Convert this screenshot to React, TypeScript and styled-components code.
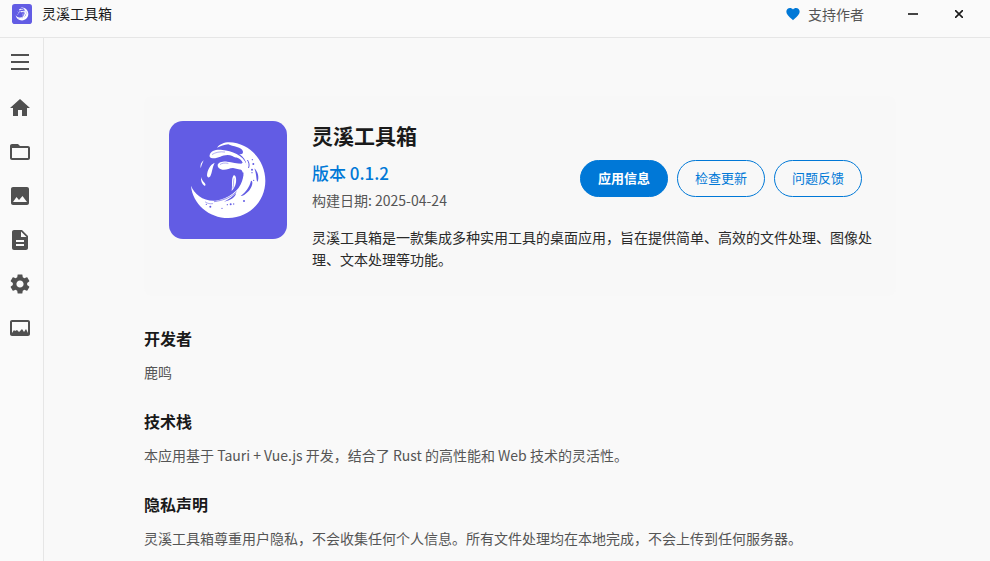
import React from "react";
import styled, { createGlobalStyle } from "styled-components";

const GlobalStyle = createGlobalStyle`
  * { box-sizing: border-box; }
  html, body, #root { height: 100%; }
  body {
    margin: 0;
    background: #fafafa;
    color: #1a1a1a;
    font-family: "Noto Sans CJK SC", sans-serif;
    font-size: 14px;
    overflow: hidden;
  }
  button { font-family: inherit; cursor: pointer; }
`;

const Window = styled.div`
  display: flex;
  flex-direction: column;
  height: 100vh;
`;

const TitleBar = styled.header`
  display: flex;
  align-items: flex-start;
  justify-content: space-between;
  flex: none;
  height: 38px;
  padding-left: 12px;
  border-bottom: 1px solid #e6e6e6;
`;

const TitleGroup = styled.div`
  display: flex;
  align-items: center;
  height: 28px;
`;

const AppName = styled.span`
  margin-left: 10px;
  padding-bottom: 2px;
  line-height: 20px;
`;

const Support = styled.a`
  display: flex;
  align-items: center;
  gap: 7px;
  margin-right: 26px;
  color: #555;
  line-height: 20px;
  text-decoration: none;
`;

const WindowButton = styled.button`
  display: flex;
  align-items: center;
  justify-content: center;
  width: 46px;
  height: 28px;
  padding: 0;
  border: 0;
  background: none;
  color: #1a1a1a;

  &:last-child { margin-right: 8px; }
`;

const Body = styled.div`
  display: flex;
  flex: 1;
  min-height: 0;
`;

const Sidebar = styled.nav`
  display: flex;
  flex-direction: column;
  flex: none;
  width: 44px;
  padding-top: 2px;
  border-right: 1px solid #e6e6e6;
`;

const NavButton = styled.button<{ $menu?: boolean }>`
  display: flex;
  align-items: center;
  justify-content: center;
  width: 40px;
  height: 44px;
  margin-bottom: ${(p) => (p.$menu ? "2px" : "0")};
  padding: 0;
  border: 0;
  background: none;
  color: #505050;
`;

const Content = styled.main`
  flex: 1;
  min-width: 0;
  padding: 58px 94px 0 100px;
  background: #f9f9f9;
  overflow: hidden;
`;

const Card = styled.section`
  display: flex;
  align-items: flex-start;
  gap: 25px;
  min-height: 200px;
  padding: 25px 23px 25px 25px;
  border-radius: 8px;
  background: #f8f8f8;
`;

const Info = styled.div`
  flex: 1;
  min-width: 0;
`;

const InfoHeader = styled.div`
  display: flex;
  align-items: center;
  justify-content: space-between;
  padding-right: 11px;
`;

const AppTitle = styled.h1`
  margin: 0 0 10px;
  font-size: 21px;
  line-height: 28px;
`;

const Version = styled.p`
  margin: 0;
  color: #0078d7;
  font-size: 17px;
  font-weight: 500;
  line-height: 28px;
`;

const BuildDate = styled.p`
  margin: 0;
  color: #555;
  line-height: 26px;
`;

const Actions = styled.div`
  display: flex;
  gap: 9px;
  margin-top: 22px;
`;

const PillButton = styled.button<{ $primary?: boolean }>`
  height: 37px;
  padding: 0 17px 2px;
  border: 1px solid #0078d7;
  border-radius: 20px;
  background: ${(p) => (p.$primary ? "#0078d7" : "transparent")};
  color: ${(p) => (p.$primary ? "#fff" : "#0078d7")};
  font-size: 13px;
  font-weight: ${(p) => (p.$primary ? 700 : 400)};
  white-space: nowrap;
`;

const Description = styled.p`
  margin: 13px 0 0;
  color: #2a2a2a;
  line-height: 22px;
`;

const Section = styled.section`
  margin-top: 31px;

  & + & { margin-top: 27px; }
`;

const SectionTitle = styled.h2`
  margin: 0 0 12px;
  font-size: 16px;
  line-height: 22px;
`;

const SectionText = styled.p`
  margin: 0;
  color: #555;
  line-height: 22px;
`;

const LogoSvg = styled.svg`
  flex: none;
`;

function Logo({ size, radius }: { size: number; radius: number }) {
  return (
    <LogoSvg width={size} height={size} viewBox="27 27 354 354" aria-hidden="true">
      <rect x="27" y="27" width="354" height="354" rx={radius} fill="#625ce4" />
      <g fill="#fff">
        <path d="M93 221C98 276 146 318 205 318C267 318 316 268 316 206C316 145 269 93 207 91C193 91 178 97 171 107C183 102 192 98 205 97C217 104 247 104 249 119C249 127 243 127 238 126C250 135 258 145 259 158C257 166 250 168 242 171C251 180 252 192 246 208C238 235 205 262 166 266C129 268 103 246 93 221Z" />
        <path d="M149 129C152 117 167 112 187 114C215 117 249 128 260 158L254 166C240 145 222 130 203 129C185 129 175 140 158 139C151 138 147 135 149 129Z" />
        <path d="M173 159C175 151 188 148 201 149C222 150 237 159 260 154L260 170C245 178 232 170 219 168C207 168 200 175 187 173C178 171 172 166 173 159Z" />
        <path d="M164 152C150 158 142 175 141 190C141 196 147 199 151 193C157 181 156 167 164 152Z" />
        <path d="M131 145C123 151 120 159 122 169C124 161 127 153 131 145ZM123 195C122 207 126 217 133 221C137 223 138 217 134 213C129 208 125 202 123 195Z" />
        <path d="M221 190C213 201 218 217 215 237C224 228 230 215 228 199C227 192 224 188 221 190Z" />
      </g>
      <g fill="none" stroke="#625ce4" strokeLinecap="round">
        <path d="M157 127C166 121 180 118 194 120" strokeWidth="1.500" />
        <path d="M181 157C186 153 195 152 204 154" strokeWidth="1.500" />
        <path d="M222 200C219 209 222 217 219 228" strokeWidth="1.500" />
        <path d="M263 145C267 151 269 160 266 167" strokeWidth="3" />
        <path d="M249 183C248 189 249 192 247 196" strokeWidth="3" />
        <path d="M229 240C209 259 188 265 163 269" strokeWidth="2" />
        <path d="M136 270C143 275 150 276 158 275" strokeWidth="1.500" />
      </g>
      <g fill="#625ce4">
        <path d="M222 137C232 134 246 143 248 153C238 153 226 148 222 137Z" />
        <path d="M283 169C294 179 298 196 293 209C288 209 291 190 283 169Z" />
        <path d="M273 206C281 206 277 227 264 239C255 248 247 253 242 252C257 240 268 226 273 206Z" />
        <path d="M228 243C227 255 214 264 192 269C207 262 218 253 228 243Z" />
        <circle cx="280" cy="156" r="3" />
        <circle cx="276" cy="173" r="3" />
        <circle cx="276" cy="182" r="2" />
        <circle cx="277" cy="143" r="2" />
        <circle cx="281" cy="205" r="2" />
        <circle cx="252" cy="267" r="3" />
        <circle cx="202" cy="278" r="2" />
        <circle cx="212" cy="277" r="3" />
        <circle cx="221" cy="276" r="2" />
        <circle cx="151" cy="284" r="3" />
        <circle cx="139" cy="277" r="2" />
        <circle cx="186" cy="289" r="2" />
      </g>
    </LogoSvg>
  );
}

function Icon({ d, size = 24 }: { d: string; size?: number }) {
  return (
    <svg width={size} height={size} viewBox="0 0 24 24" fill="currentColor" aria-hidden="true">
      <path d={d} />
    </svg>
  );
}

const navItems = [
  { label: "菜单", d: "M3 6h18V4H3zm0 7h18v-2H3zm0 7h18v-2H3z", menu: true },
  { label: "首页", d: "M10 20v-6h4v6h5v-8h3L12 3 2 12h3v8z" },
  { label: "文件", d: "M20 6h-8l-2-2H4c-1.100 0-2 .9-2 2v12c0 1.100.9 2 2 2h16c1.100 0 2-.9 2-2V8c0-1.100-.9-2-2-2zm0 12H4V8h16z" },
  { label: "图像", d: "M21 19V5c0-1.100-.9-2-2-2H5c-1.100 0-2 .9-2 2v14c0 1.100.9 2 2 2h14c1.100 0 2-.9 2-2zM5 18l3.500-5 2.500 3 3.500-4 4.500 6z" },
  { label: "文本", d: "M14 2H6c-1.100 0-2 .9-2 2v16c0 1.100.9 2 2 2h12c1.100 0 2-.9 2-2V8zm2 16H8v-2h8zm0-4H8v-2h8zm-3-5V3.500L18.500 9z" },
  { label: "设置", d: "M19.140 12.940c.04-.3.06-.61.06-.94 0-.32-.02-.64-.07-.94l2.030-1.580c.18-.14.23-.41.12-.61l-1.920-3.320c-.12-.22-.37-.29-.59-.22l-2.390.96c-.5-.38-1.030-.7-1.620-.94l-.36-2.540c-.04-.24-.24-.41-.48-.41h-3.840c-.24 0-.43.17-.47.41l-.36 2.540c-.59.24-1.130.57-1.620.94l-2.390-.96c-.22-.08-.47 0-.59.22L2.740 8.870c-.12.21-.08.47.12.61l2.030 1.580c-.05.3-.09.63-.09.94s.02.64.07.94l-2.030 1.580c-.18.14-.23.41-.12.61l1.920 3.320c.12.22.37.29.59.22l2.390-.96c.5.38 1.030.7 1.620.94l.36 2.540c.05.24.24.41.48.41h3.840c.24 0 .44-.17.47-.41l.36-2.540c.59-.24 1.130-.56 1.620-.94l2.390.96c.22.08.47 0 .59-.22l1.920-3.320c.12-.22.07-.47-.12-.61zM12 15.600c-1.980 0-3.600-1.620-3.600-3.600s1.620-3.600 3.600-3.600 3.600 1.620 3.600 3.600-1.620 3.600-3.600 3.600z" },
  { label: "图库", d: "M20 4H4c-1.100 0-2 .9-2 2v12c0 1.100.9 2 2 2h16c1.100 0 2-.9 2-2V6c0-1.100-.9-2-2-2zM4 6h16v11l-2-4-2 3-2-3-3 3-2-2-2 1-1-1-2 3z" },
];

const sections = [
  { title: "开发者", text: "鹿鸣" },
  { title: "技术栈", text: "本应用基于 Tauri + Vue.js 开发，结合了 Rust 的高性能和 Web 技术的灵活性。" },
  { title: "隐私声明", text: "灵溪工具箱尊重用户隐私，不会收集任何个人信息。所有文件处理均在本地完成，不会上传到任何服务器。" },
];

export default function App() {
  return (
    <>
      <GlobalStyle />
      <Window>
        <TitleBar>
          <TitleGroup>
            <Logo size={20} radius={50} />
            <AppName>灵溪工具箱</AppName>
          </TitleGroup>
          <TitleGroup>
            <Support href="#support">
              <svg width="16" height="16" viewBox="0 0 24 24" fill="#0078d7" aria-hidden="true">
                <path d="M12 21.350l-1.450-1.320C5.400 15.360 2 12.280 2 8.500 2 5.420 4.420 3 7.500 3c1.740 0 3.410.81 4.500 2.090C13.090 3.810 14.760 3 16.500 3 19.580 3 22 5.420 22 8.500c0 3.780-3.400 6.860-8.550 11.540z" />
              </svg>
              支持作者
            </Support>
            <WindowButton aria-label="最小化">
              <svg width="10" height="10" viewBox="0 0 10 10" aria-hidden="true">
                <path d="M0 4h10v2H0z" fill="#444" />
              </svg>
            </WindowButton>
            <WindowButton aria-label="关闭">
              <svg width="8" height="8" viewBox="0 0 8 8" stroke="currentColor" strokeWidth="1.6" aria-hidden="true">
                <path d="M0 0l8 8M8 0L0 8" />
              </svg>
            </WindowButton>
          </TitleGroup>
        </TitleBar>
        <Body>
          <Sidebar>
            {navItems.map((n) => (
              <NavButton key={n.label} aria-label={n.label} $menu={n.menu}>
                <Icon d={n.d} />
              </NavButton>
            ))}
          </Sidebar>
          <Content>
            <Card>
              <Logo size={118} radius={42} />
              <Info>
                <InfoHeader>
                  <div>
                    <AppTitle>灵溪工具箱</AppTitle>
                    <Version>版本 0.1.2</Version>
                    <BuildDate>构建日期: 2025-04-24</BuildDate>
                  </div>
                  <Actions>
                    <PillButton $primary>应用信息</PillButton>
                    <PillButton>检查更新</PillButton>
                    <PillButton>问题反馈</PillButton>
                  </Actions>
                </InfoHeader>
                <Description>
                  灵溪工具箱是一款集成多种实用工具的桌面应用，旨在提供简单、高效的文件处理、图像处理、文本处理等功能。
                </Description>
              </Info>
            </Card>
            {sections.map((s) => (
              <Section key={s.title}>
                <SectionTitle>{s.title}</SectionTitle>
                <SectionText>{s.text}</SectionText>
              </Section>
            ))}
          </Content>
        </Body>
      </Window>
    </>
  );
}
